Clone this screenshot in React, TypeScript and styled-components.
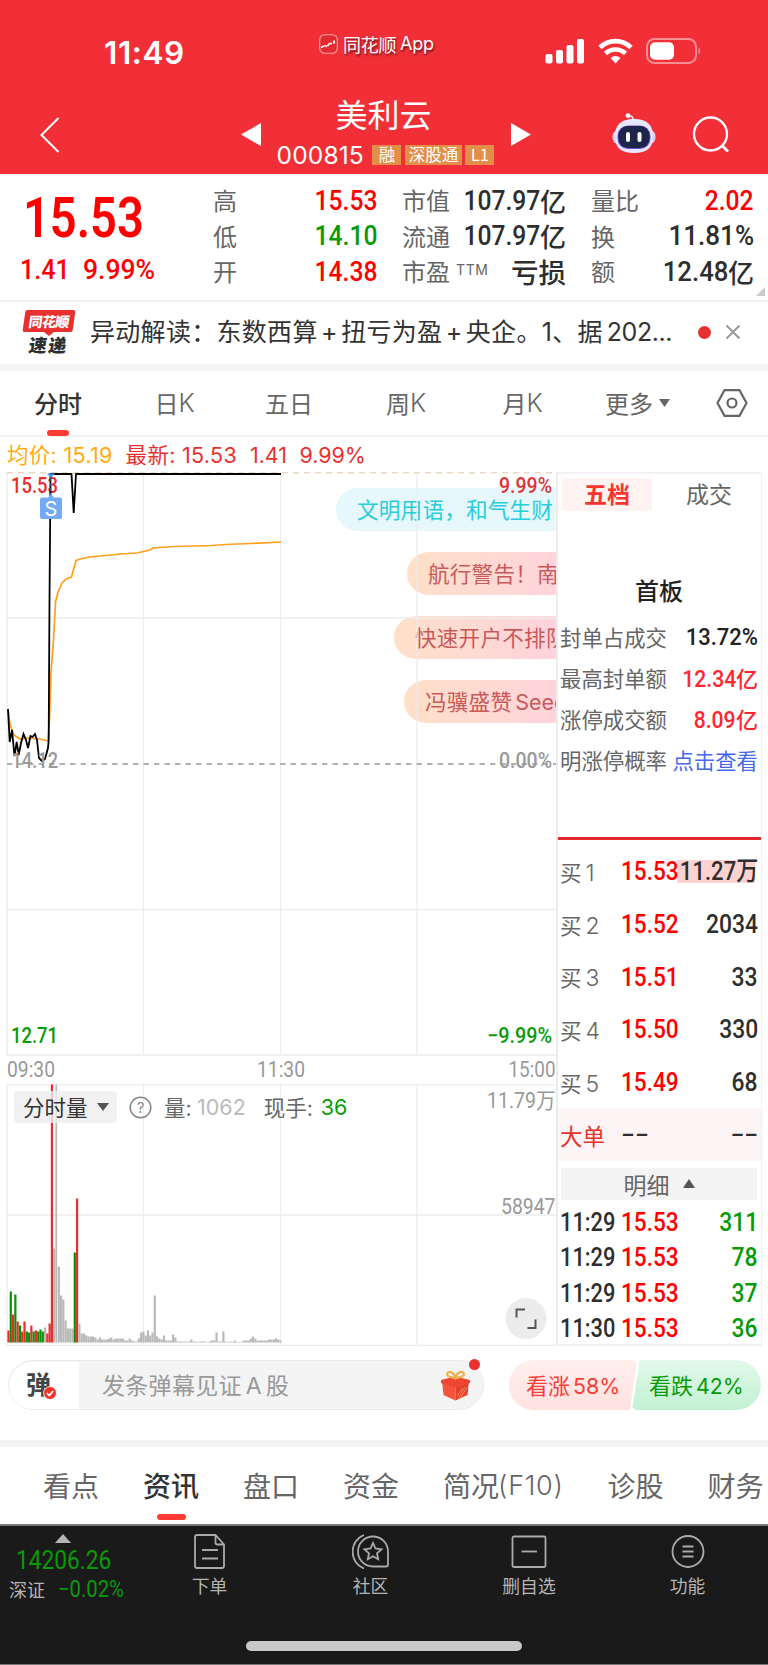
import React from "react";
import styled, { createGlobalStyle, css } from "styled-components";

const RED = "#fe0000";
const GREEN = "#089b08";
const INK = "#2e2e2e";
const GREY = "#666";

const Global = createGlobalStyle`
  * { box-sizing: border-box; }
  html, body { margin: 0; padding: 0; background: #fff; }
  body { font-family: Inter, "Noto Sans CJK SC", sans-serif; color: ${INK}; }
  svg { display: block; flex: none; }
`;

const cjk = css`font-family: "Noto Sans CJK SC", sans-serif;`;

const Page = styled.div`
  width: 768px;
  height: 1665px;
  overflow: hidden;
  background: #fff;
  display: flex;
  flex-direction: column;
`;

/* Narrow tabular numerals used for all quotes */
const Num = styled.span<{ $size: number; $c?: string; $w?: number; $sx?: number; $from?: string }>`
  display: inline-block;
  font-family: Roboto, "Noto Sans CJK SC", sans-serif;
  font-size: ${(p) => p.$size}px;
  font-weight: ${(p) => p.$w ?? 500};
  line-height: 1;
  color: ${(p) => p.$c ?? INK};
  white-space: pre;
  transform: scaleX(${(p) => p.$sx ?? 0.88});
  transform-origin: ${(p) => p.$from ?? "right"} center;
`;

/* ---------- header ---------- */
const Header = styled.header`
  height: 174px;
  flex: none;
  background: #f22f37;
  color: #fff;
`;

const StatusBar = styled.div`
  height: 92px;
  padding: 34px 68px 0 104px;
  display: grid;
  grid-template-columns: 215px 226px 1fr;
  align-items: start;
`;

const Clock = styled.div`
  font-weight: 600;
  font-size: 31.5px;
  line-height: 38px;
  letter-spacing: 0.6px;
`;

const AppMark = styled.div`
  display: flex;
  align-items: center;
  gap: 5px;
  margin-top: -1px;
  font-size: 18px;
  line-height: 22px;
  text-shadow: 1px 2px 2px rgba(0, 0, 0, 0.55);
  white-space: nowrap;
  span { ${cjk} letter-spacing: -0.3px; }
  em { font-style: normal; margin-left: -1px; letter-spacing: -0.3px; }
`;

const Signals = styled.div`
  display: flex;
  gap: 13px;
  padding-top: 4px;
`;

const NavBar = styled.div`
  height: 82px;
  display: grid;
  grid-template-columns: 241px 20px 250px 20px 1fr;
  align-items: start;
`;

const BackBox = styled.div`padding: 25px 0 0 40px;`;
const ArrowBox = styled.div`padding-top: 31px;`;
const NavIcons = styled.div`
  display: flex;
  gap: 36px;
  padding: 21px 0 0 81px;
  svg:last-child { margin-top: -1px; }
`;

const TitleBlock = styled.div`
  display: flex;
  flex-direction: column;
  align-items: center;
`;

const StockName = styled.h1`
  margin: 1px 5px 0 0;
  ${cjk}
  font-weight: 400;
  font-size: 32px;
  line-height: 40px;
`;

const CodeRow = styled.div`
  display: flex;
  align-items: center;
  gap: 3.5px;
  margin: 11px 1px 0 0;
  height: 22px;
`;

const Code = styled.span`
  font-size: 24.5px;
  line-height: 22px;
  letter-spacing: 0.15px;
  margin-right: 5px;
`;

const Badge = styled.span<{ $w: number }>`
  width: ${(p) => p.$w}px;
  height: 20px;
  background: #e28f49;
  ${cjk}
  font-size: 16.5px;
  line-height: 19px;
  text-align: center;
`;

/* ---------- quote summary ---------- */
const Quote = styled.section`
  height: 128px;
  flex: none;
  display: grid;
  grid-template-columns: 213px 164px 25px 164px 25px 163px 1fr;
  border-bottom: 2px solid #efefef;
  padding-top: 9px;
`;

const LastPrice = styled.div`
  display: flex;
  flex-direction: column;
  padding: 8px 0 0 23px;
`;

const Change = styled.div`
  display: flex;
  margin: 10px 0 0 -3px;
  > span:first-child { width: 63px; }
`;

const Metrics = styled.dl`
  margin: 0;
  display: flex;
  flex-direction: column;
`;

const Metric = styled.div`
  height: 35.6px;
  display: flex;
  justify-content: space-between;
  align-items: center;
  white-space: nowrap;
  dt { ${cjk} font-size: 24px; line-height: 33px; padding-bottom: 2px; color: ${GREY}; width: 0; }
  sup { font-family: Inter; font-size: 14px; letter-spacing: 0.6px; margin-left: 6px; vertical-align: 6px; line-height: 1; }
  dd { margin: 0; display: flex; align-items: center; }
`;

const Unit = styled.b<{ $size?: number; $c?: string }>`
  ${cjk}
  font-weight: 500;
  font-size: ${(p) => p.$size ?? 26}px;
  line-height: 1;
  color: ${(p) => p.$c ?? INK};
`;

const Corner = styled.div`align-self: end; padding: 0 0 4px 2px;`;

/* ---------- news strip ---------- */
const News = styled.section`
  height: 62px;
  flex: none;
  display: flex;
  align-items: center;
  padding: 0 0 2px 21px;
`;

const NewsText = styled.div`
  ${cjk}
  font-size: 25px;
  line-height: 36px;
  letter-spacing: 0.3px;
  color: #333;
  width: 607px;
  margin: -2px 0 0 14px;
  white-space: nowrap;
  span { font-family: Inter; }
`;
const Plus = styled.span`margin: 0 3.3px;`;
const Tail = styled.span`margin-left: 4px; letter-spacing: -0.45px;`;

const Dot = styled.i<{ $s: number }>`
  width: ${(p) => p.$s}px;
  height: ${(p) => p.$s}px;
  border-radius: 50%;
  background: #e93030;
  flex: none;
`;
const NewsDot = styled(Dot)`margin: 0 14px 0 1px;`;

const Logo = styled.div`
  ${cjk}
  width: 55px;
  height: 44px;
  flex: none;
  font-weight: 900;
  display: flex;
  flex-direction: column;
  align-items: center;
`;
const LogoTop = styled.div`
  width: 50px;
  height: 22px;
  border-radius: 2px;
  background: #e93030;
  transform: skewX(-8deg);
  color: #fff;
  font-size: 14px;
  line-height: 22px;
  text-align: center;
  letter-spacing: -0.6px;
`;
const LogoTip = styled.i`
  border: 5px solid transparent;
  border-top: 4px solid #e93030;
  border-bottom: 0;
`;
const LogoBottom = styled.div`
  transform: skewX(-8deg);
  font-size: 18px;
  line-height: 18px;
  margin-top: -1px;
  letter-spacing: 1.5px;
`;

const Band = styled.div`height: 7px; flex: none; background: #f4f4f4;`;

/* ---------- period tabs ---------- */
const Periods = styled.nav`
  height: 66px;
  flex: none;
  border-bottom: 2px solid #f1f1f1;
  display: grid;
  grid-template-columns: 116px 117px 112px 122px 111px 119px 69px;
  align-items: center;
  justify-items: center;
`;

const Tab = styled.div<{ $on?: boolean }>`
  height: 64px;
  line-height: 64px;
  ${cjk}
  font-size: 24px;
  font-weight: ${(p) => (p.$on ? 500 : 400)};
  color: ${(p) => (p.$on ? "#333" : GREY)};
  display: flex;
  align-items: center;
  gap: 6px;
  position: relative;
  span { font-family: Inter; font-weight: 300; margin-left: -6px; font-size: 25px; }
`;

const Underline = styled.i<{ $w: number; $b: number }>`
  position: absolute;
  left: 50%;
  bottom: ${(p) => p.$b}px;
  width: ${(p) => p.$w}px;
  margin-left: -${(p) => p.$w / 2}px;
  height: 6px;
  border-radius: 3px;
  background: #fb3a32;
`;

const InfoLine = styled.div`
  height: 35px;
  flex: none;
  padding: 0 0 0 7px;
  display: flex;
  font-size: 21.5px;
  line-height: 36px;
  letter-spacing: -0.05px;
  color: #e93030;
  white-space: pre;
`;
const InfoItem = styled.span<{ $c?: string }>`
  color: ${(p) => p.$c ?? "#e93030"};
  margin-right: 12.5px;
`;
const InfoPair = styled(InfoItem)`
  letter-spacing: 0.3px;
  margin-right: 13px;
`;

/* ---------- chart and order book ---------- */
const Market = styled.section`
  height: 874px;
  flex: none;
  display: flex;
  padding: 0 6px 0 6px;
`;

const Charts = styled.div`
  width: 550px;
  display: flex;
  flex-direction: column;
  position: relative;
  overflow: hidden;
  > svg { position: relative; z-index: 1; }
`;

const Bullet = styled.div<{ $x: number; $y: number; $pad: number; $cool?: boolean }>`
  position: absolute;
  left: ${(p) => p.$x}px;
  top: ${(p) => p.$y}px;
  width: 260px;
  height: 43px;
  border-radius: 22px 0 0 22px;
  padding-left: ${(p) => p.$pad}px;
  ${cjk}
  font-size: 21.6px;
  line-height: 42px;
  letter-spacing: 0.2px;
  white-space: nowrap;
  color: ${(p) => (p.$cool ? "#27cddb" : "#c85a5c")};
  background: ${(p) => (p.$cool ? "#e6f8fb" : "linear-gradient(90deg, #ffe0c8, #ffd3dc 160px)")};
  span { font-family: Inter; font-size: 21.5px; letter-spacing: 0; margin-left: 3px; }
`;

const VolumeTools = styled.div`
  position: absolute;
  z-index: 2;
  left: 8px;
  top: 619px;
  height: 32px;
  display: flex;
  align-items: center;
  ${cjk}
  font-size: 21.5px;
  line-height: 30px;
  color: ${GREY};
  white-space: pre;
`;

const VolumePick = styled.div`
  width: 103px;
  height: 32px;
  border-radius: 4px;
  background: rgba(238, 238, 238, 0.82);
  color: #333;
  display: flex;
  align-items: center;
  gap: 9px;
  padding-left: 9px;
  margin-right: 12px;
`;
const ToolLabel = styled.div<{ $l: number; $w: number }>`
  margin-left: ${(p) => p.$l}px;
  width: ${(p) => p.$w}px;
  span { font-family: Inter; }
`;
const ToolValue = styled.div<{ $c: string }>`
  font-family: Inter;
  font-size: 21.5px;
  color: ${(p) => p.$c};
`;

const Book = styled.aside`
  width: 206px;
  border: 2px solid #f1f1f1;
  border-left-color: #ececec;
  border-right-width: 1px;
  display: flex;
  flex-direction: column;
  > * { flex: none; }
`;

const BookTabs = styled.div`
  display: flex;
  gap: 5px;
  height: 37px;
  padding: 4px 0 0 4px;
  ${cjk}
  font-size: 23px;
  line-height: 30px;
  text-align: center;
  color: ${GREY};
`;
const BookTab = styled.div<{ $on?: boolean }>`
  width: ${(p) => (p.$on ? 91 : 105)}px;
  height: 33px;
  border-radius: 4px;
  ${(p) => p.$on && "background:#fff3f2; color:#fa3530; font-weight:700;"}
`;

const Seal = styled.div`
  height: 329px;
  padding: 64px 3px 0 2px;
  border-bottom: 3px solid #e6282d;
`;
const SealTitle = styled.div`
  ${cjk}
  font-weight: 500;
  font-size: 24px;
  line-height: 30px;
  text-align: center;
  color: #222;
  margin-bottom: 11px;
`;
const SealRow = styled.div`
  height: 41px;
  display: flex;
  justify-content: space-between;
  align-items: center;
  ${cjk}
  font-size: 21.4px;
  color: ${GREY};
  white-space: nowrap;
  > span:first-child { width: 0; }
  > b { font-weight: 400; color: #4568ee; }
`;

const Orders = styled.div`padding-top: 5px;`;
const Order = styled.div<{ $h: number; $big?: boolean }>`
  height: ${(p) => p.$h}px;
  padding: 0 3px 0 2px;
  display: grid;
  grid-template-columns: 61px minmax(0, 1fr) auto;
  align-items: center;
  background: ${(p) => (p.$big ? "#fdf5f5" : "transparent")};
  white-space: nowrap;
  > i { ${cjk} font-style: normal; font-size: ${(p) => (p.$big ? 22.5 : 21.5)}px; color: ${(p) => (p.$big ? "#e93030" : GREY)}; }
  > i > span { font-family: Inter; font-weight: 300; font-size: 23px; margin-left: 4px; }
`;

const SizeBar = styled.div<{ $hot?: boolean }>`
  display: flex;
  align-items: center;
  justify-content: flex-end;
  height: 23px;
  width: 81px;
  background: linear-gradient(${(p) => (p.$hot ? "#ffd2d2, #ffd2d2" : "transparent, transparent")}) 0 0 / 78px 100% no-repeat;
`;

const DetailHead = styled.div`
  height: 32px;
  margin: 7px 4px 4px 3px;
  background: #f4f4f4;
  display: flex;
  align-items: center;
  justify-content: center;
  gap: 13px;
  ${cjk}
  font-size: 23px;
  color: ${GREY};
`;

/* ---------- comment bar ---------- */
const CommentBar = styled.section`
  height: 94px;
  flex: none;
  display: flex;
  align-items: flex-start;
  padding: 14px 7px 0 8px;
`;

const InputPill = styled.div`
  width: 476px;
  height: 50px;
  border-radius: 25px;
  border: 1.5px solid #ebebeb;
  background: #f4f4f4;
  display: flex;
  align-items: center;
  position: relative;
  ${cjk}
  font-size: 23px;
  color: #999;
`;
const Toggle = styled.div`
  width: 70px;
  height: 47px;
  border-radius: 24px 0 0 24px;
  background: #fff;
  padding: 4px 0 0 17px;
  margin-right: 23px;
  font-weight: 700;
  font-size: 25px;
  line-height: 34px;
  color: #444;
  position: relative;
  svg { position: absolute; left: 34px; top: 24px; }
`;
const Placeholder = styled.div`
  width: 339px;
  margin-top: -3px;
  letter-spacing: 0.3px;
  span { font-family: Inter; margin: 0 4px; }
`;
const PillDot = styled(Dot)`position: absolute; right: 3px; top: -2px;`;

const Votes = styled.div`margin-left: 25px; display: flex;`;
const Vote = styled.div<{ $up?: boolean }>`
  width: ${(p) => (p.$up ? 128 : 129)}px;
  height: 50px;
  margin-left: ${(p) => (p.$up ? 0 : -5)}px;
  padding-left: 17px;
  clip-path: ${(p) =>
    p.$up ? "polygon(0 0, 100% 0, 94.5% 100%, 0 100%)" : "polygon(6% 0, 100% 0, 100% 100%, 0 100%)"};
  border-radius: ${(p) => (p.$up ? "25px 5px 5px 25px" : "5px 25px 25px 5px")};
  background: ${(p) =>
    p.$up ? "linear-gradient(#ffefed, #ffe2df)" : "linear-gradient(#e2f9ea, #c2f1d3)"};
  color: ${(p) => (p.$up ? "#fa3c36" : GREEN)};
  ${cjk}
  font-size: 22px;
  line-height: 48px;
  white-space: nowrap;
  span { font-family: Inter; font-size: 21.3px; margin-left: 3px; }
`;

/* ---------- section tabs ---------- */
const Sections = styled.nav`
  height: 79px;
  flex: none;
  display: flex;
  gap: 44px;
  padding-left: 43px;
  border-bottom: 2px solid #777;
`;
const SectionTab = styled(Tab)`
  height: 77px;
  line-height: 77px;
  font-size: 28px;
  white-space: nowrap;
  flex: none;
  em { font: 300 27px Inter; letter-spacing: 0.7px; margin-left: -7px; }
`;

/* ---------- bottom bar ---------- */
const BottomBar = styled.footer`
  flex: 1;
  background: #1a1a1a;
  display: flex;
  flex-direction: column;
  align-items: center;
  border-bottom: 1px solid #777;
`;
const Actions = styled.div`
  width: 768px;
  height: 115px;
  display: grid;
  grid-template-columns: 125px 169px 153px 164px 153px;
`;
const IndexBox = styled.div`
  display: flex;
  flex-direction: column;
  align-items: center;
  padding-top: 8px;
  > span { margin: 5px 0 4px 2px; }
`;
const IndexRow = styled.div`
  align-self: flex-start;
  display: flex;
  gap: 13px;
  align-items: center;
  ${cjk}
  font-size: 18px;
  line-height: 22px;
  color: #b5b5b5;
  white-space: nowrap;
  margin-left: 9px;
`;
const Action = styled.div`
  display: flex;
  flex-direction: column;
  align-items: center;
  padding-top: 8px;
  ${cjk}
  font-size: 17.8px;
  line-height: 24px;
  color: #b5b5b5;
  svg { margin-bottom: 4px; }
`;
const HomeBar = styled.div`
  width: 276px;
  height: 10px;
  border-radius: 5px;
  background: #c8c8c8;
`;

/* ---------- data ---------- */
const bars = "r12 g51 r28 g48 r21 g17 r11 r21 g11 g10 r17 g11 r12 g11 g13 g11 w15 r9 r19 r258 w94 w258 w76 w47 w43 w22 w14 w14 w14 g90 r144 w19 w9 w9 w7 w6 w6 w6 w5 w3 w5 w3 w3 w3 w4 w5 w3 w4 w4 w4 w4 w2 w2 w4 w2 w1 w1 w4 w10 w11 w7 w12 w7 w10 w47 w6 w4 w3 w7 w2 w2 w2 w8 w5 w1 w1 w1 w1 w1 w1 w3 w1 w1 w0 w1 w1 w1 w0 w1 w2 w2 w10 w1 w1 w11 w1 w0 w1 w0 w2 w0 w0 w0 w2 w2 w2 w4 w6 w4 w2 w2 w2 w2 w2 w3 w3 w3 w4 w3 w2"
  .split(" ")
  .map((s) => [s[0], Number(s.slice(1))] as [string, number]);
const barColor: Record<string, string> = { r: "#ea2c2c", g: "#089108", w: "#b9b9b9" };

const bids = [
  ["1", "15.53", "11.27万"],
  ["2", "15.52", "2034"],
  ["3", "15.51", "33"],
  ["4", "15.50", "330"],
  ["5", "15.49", "68"],
];
const trades = [
  ["11:29", "311"],
  ["11:29", "78"],
  ["11:29", "37"],
  ["11:30", "36"],
];

const ChartLabel = styled.text`
  font-family: Roboto, "Noto Sans CJK SC", sans-serif;
  font-size: 21.5px;
`;
const L = (p: { x: number; y: number; w: number; c: string; b?: number; children: string }) => (
  <ChartLabel x={p.x} y={p.y} fill={p.c} fontWeight={p.b ?? 500} textLength={p.w} lengthAdjust="spacingAndGlyphs">
    {p.children}
  </ChartLabel>
);

const PriceChart = () => (
  <svg width="550" height="612" viewBox="6 472 550 612">
    <g stroke="#ededed" strokeWidth="1.3" fill="none">
      <path d="M7 472V1055H557M143.5 472V1055M280.5 472V1055M417 472V1055M7 618H557M7 909.5H557M7 1055H557" />
    </g>
    <path d="M7 472.7H557" stroke="#ead9c0" strokeWidth="1.6" strokeDasharray="6 5" />
    <L x={11} y={493} w={47} c="#ea2c2c">15.53</L>
    <path d="M7 764H557" stroke="#999" strokeWidth="1.4" strokeDasharray="5.5 5" />
    <path
      d="M8 710L10 724L14 735L20 739L26 738L40 739L48 741L49.5 720L51 672L53.5 640L55.5 602L58 592L62 583L66 579L71.5 577L74 568L76 560.5L82 558.5L90 557L120 554L137 553L150 550L153 548L174 546.5L212 545.5L225 544.5L250 543.5L281 542"
      fill="none" stroke="#ff9f1c" strokeWidth="1.7"
    />
    <path
      d="M8 709L9.7 742L12 730L14.5 756L16.7 742L18.7 755L21 743L23.5 734L26 740L28 748L30.5 736L32.5 737L35 734L37 740L39 758L42 761L45 759L48 748L48.7 740L49.5 600L50.5 474H71.5L73.7 513L76 474H281"
      fill="none" stroke="#000" strokeWidth="1.8"
    />
    <L x={11.5} y={768} w={46.5} c="#9a9a9a">14.12</L>
    <path d="M47 473.5H55L51 478z" fill="#4a8ff0" />
    <path d="M51 478V497" stroke="#4a8ff0" strokeWidth="1.2" strokeDasharray="3 2" />
    <path d="M41.5 497.5H48L51 494L54 497.5H60Q62 497.5 62 499.5V517Q62 519 60 519H42Q40 519 40 517V499.5Q40 497.5 42 497.5z" fill="#74aaf3" />
    <text x="51" y="515.5" textAnchor="middle" fontFamily="Inter" fontSize="20" fill="#fff">S</text>
    <L x={499} y={493} w={53} c="#e03236">9.99%</L>
    <L x={499} y={768} w={53} c="#9a9a9a">0.00%</L>
    <L x={11} y={1042.5} w={47} c={GREEN}>12.71</L>
    <L x={487} y={1042.5} w={65} c={GREEN}>−9.99%</L>
    <L x={7} y={1076.5} w={48} c="#999" b={400}>09:30</L>
    <L x={257} y={1076.5} w={48} c="#999" b={400}>11:30</L>
    <L x={508.5} y={1076.5} w={47} c="#999" b={400}>15:00</L>
  </svg>
);

const VolumeChart = () => (
  <svg width="550" height="262" viewBox="6 1084 550 262">
    <path d="M557 1084.7H7V1345.3H557M143.5 1084V1345M280.5 1084V1345M417 1084V1345M7 1215H557" stroke="#ededed" strokeWidth="1.3" fill="none" />
    {bars.map(([c, h], i) => (
      <rect key={i} x={7.4 + i * 2.286} y={1342.5 - Math.max(h, 0.5)} width={c === "w" && h > 200 ? 1.7 : 2.2} height={Math.max(h, 0.5)} fill={barColor[c]} />
    ))}
    <L x={487} y={1107.5} w={68.5} c="#999" b={400}>11.79万</L>
    <L x={501} y={1213.5} w={54.5} c="#999" b={400}>58947</L>
    <circle cx="526" cy="1318.5" r="20.5" fill="#ececec" />
    <path d="M516.5 1317.5V1309.5H525M527.5 1328H535.5V1319.5" stroke="#555" strokeWidth="2" fill="none" />
  </svg>
);

const Robot = () => (
  <svg width="44" height="41" viewBox="0 0 44 41">
    <path d="M17 2.5Q21 2.5 21.5 8" fill="none" stroke="#e8e8ff" strokeWidth="1.6" />
    <circle cx="16" cy="2.7" r="2.4" fill="#fff" />
    <rect x="0.5" y="17" width="43" height="14" rx="6" fill="#cfd2f7" />
    <path d="M22 6C36 6 41 13 41 23C41 35 35 40 22 40C9 40 3 35 3 23C3 13 8 6 22 6z" fill="#e6e7fc" />
    <rect x="5.5" y="12.5" width="33" height="23.5" rx="10.5" fill="#6b4fd0" />
    <rect x="6.5" y="13" width="31" height="22" rx="9.5" fill="#1d2648" />
    <rect x="14" y="19" width="4" height="10" rx="2" fill="#fff" />
    <rect x="25.5" y="19" width="4" height="10" rx="2" fill="#fff" />
  </svg>
);

const Gift = () => (
  <svg width="29" height="31" viewBox="0 0 29 31">
    <path d="M1 11L14.5 15V30.5L2.5 25z" fill="#f4553a" />
    <path d="M28 11L14.5 15V30.5L26.5 25z" fill="#e2402c" />
    <path d="M0 10L14 6.5L29 10V13L14.5 17.500L0 13z" fill="#ee4630" />
    <path d="M17 29L24 17M19.5 28L26.5 17M21.5 18L16 26" stroke="#f58a5c" strokeWidth="0.9" />
    <path d="M14.5 8.5C11 7 5.5 7 6 4C6.5 0.500 13 1 14.5 8.5C16 1 22.5 0.500 23 4C23.500 7 18 7 14.5 8.5z" fill="none" stroke="#eeb04b" strokeWidth="2.2" />
  </svg>
);

export default function App() {
  return (
    <Page>
      <Global />
      <Header>
        <StatusBar>
          <Clock>11:49</Clock>
          <AppMark>
            <svg width="19" height="20" viewBox="0 0 19 20">
              <rect x="0.7" y="0.7" width="17.6" height="18.6" rx="5" fill="#e22a31" stroke="#ffa3a5" strokeWidth="1.1" />
              <path d="M2 13.5L5 12M5.5 11.5L8 12.5M8.5 12L11 9M11.5 10L13 9" stroke="#fff" strokeWidth="1.6" fill="none" />
              <path d="M15 6.5V9.5" stroke="#fff" strokeWidth="2" />
            </svg>
            <span>同花顺</span><em>App</em>
          </AppMark>
          <Signals>
            <svg width="40" height="26" viewBox="0 0 40 26" fill="#fff">
              <rect x="0.5" y="16" width="7" height="9.5" rx="2" />
              <rect x="11" y="12" width="7" height="13.5" rx="2" />
              <rect x="21.5" y="7" width="7" height="18.5" rx="2" />
              <rect x="32" y="1" width="7" height="24.5" rx="2" />
            </svg>
            <svg width="35" height="26" viewBox="0 0 35 26" fill="none" stroke="#fff" strokeWidth="4.6">
              <path d="M2 9.5A22 22 0 0 1 33 9.5" />
              <path d="M7.5 15.5A14.5 14.5 0 0 1 27.5 15.5" />
              <path d="M17.5 25.5L12.5 20A7.5 7.5 0 0 1 22.5 20z" fill="#fff" stroke="none" />
            </svg>
            <svg width="56" height="26" viewBox="0 0 56 26">
              <rect x="1" y="1" width="49" height="24" rx="7.5" fill="none" stroke="#f98f93" strokeWidth="2" />
              <rect x="4" y="4.3" width="24" height="17.5" rx="5" fill="#fff" />
              <path d="M52.5 9Q56 13 52.5 17z" fill="#f98f93" />
            </svg>
          </Signals>
        </StatusBar>
        <NavBar>
          <BackBox>
            <svg width="20" height="36" viewBox="0 0 20 36"><path d="M18.5 1L1.5 18L18.5 35" fill="none" stroke="#fff" strokeWidth="2" /></svg>
          </BackBox>
          <ArrowBox><svg width="20" height="23"><path d="M20 0V23L0 11.5z" fill="#fff" /></svg></ArrowBox>
          <TitleBlock>
            <StockName>美利云</StockName>
            <CodeRow>
              <Code>000815</Code>
              <Badge $w={29}>融</Badge>
              <Badge $w={57}>深股通</Badge>
              <Badge $w={29}>L1</Badge>
            </CodeRow>
          </TitleBlock>
          <ArrowBox><svg width="20" height="23"><path d="M0 0V23L20 11.5z" fill="#fff" /></svg></ArrowBox>
          <NavIcons>
            <Robot />
            <svg width="38" height="40" viewBox="0 0 38 40" fill="none" stroke="#fff" strokeWidth="2.3">
              <circle cx="18.5" cy="22" r="16.5" /><path d="M29.5 33L36 39.5" strokeWidth="2.8" />
            </svg>
          </NavIcons>
        </NavBar>
      </Header>

      <Quote>
        <LastPrice>
          <Num $size={55} $w={600} $c={RED} $from="left" $sx={0.855}>15.53</Num>
          <Change>
            <Num $size={28.5} $c={RED} $from="left">1.41</Num>
            <Num $size={28.5} $c={RED} $from="left" $sx={0.93}>9.99%</Num>
          </Change>
        </LastPrice>
        <Metrics>
          <Metric><dt>高</dt><dd><Num $size={28} $c={RED}>15.53</Num></dd></Metric>
          <Metric><dt>低</dt><dd><Num $size={28} $c={GREEN}>14.10</Num></dd></Metric>
          <Metric><dt>开</dt><dd><Num $size={28} $c={RED}>14.38</Num></dd></Metric>
        </Metrics>
        <span />
        <Metrics>
          <Metric><dt>市值</dt><dd><Num $size={28}>107.97</Num><Unit>亿</Unit></dd></Metric>
          <Metric><dt>流通</dt><dd><Num $size={28}>107.97</Num><Unit>亿</Unit></dd></Metric>
          <Metric><dt>市盈<sup>TTM</sup></dt><dd><Unit $size={27.5}>亏损</Unit></dd></Metric>
        </Metrics>
        <span />
        <Metrics>
          <Metric><dt>量比</dt><dd><Num $size={28} $c={RED}>2.02</Num></dd></Metric>
          <Metric><dt>换</dt><dd><Num $size={28} $sx={0.93}>11.81%</Num></dd></Metric>
          <Metric><dt>额</dt><dd><Num $size={28} $sx={0.92}>12.48</Num><Unit>亿</Unit></dd></Metric>
        </Metrics>
        <Corner><svg width="9" height="9"><path d="M9 0V9H0z" fill="#ccc" /></svg></Corner>
      </Quote>

      <News>
        <Logo><LogoTop>同花顺</LogoTop><LogoTip /><LogoBottom>速递</LogoBottom></Logo>
        <NewsText>异动解读：东数西算<Plus>+</Plus>扭亏为盈<Plus>+</Plus>央企。<span>1</span>、据<Tail>202...</Tail></NewsText>
        <NewsDot $s={13} />
        <svg width="16" height="16" viewBox="0 0 16 16"><path d="M1.5 1.5L14.5 14.5M14.5 1.5L1.5 14.5" stroke="#999" strokeWidth="2" /></svg>
      </News>
      <Band />

      <Periods>
        <Tab $on>分时<Underline $w={22} $b={-1} /></Tab>
        <Tab>日<span>K</span></Tab>
        <Tab>五日</Tab>
        <Tab>周<span>K</span></Tab>
        <Tab>月<span>K</span></Tab>
        <Tab>更多<svg width="11" height="8"><path d="M0 0H11L5.5 8z" fill={GREY} /></svg></Tab>
        <svg width="32" height="28" viewBox="0 0 32 28" fill="none" stroke={GREY} strokeWidth="2.2">
          <path d="M8.5 1.2H23.5L30.5 14L23.5 26.8H8.5L1.5 14z" /><circle cx="16" cy="14" r="4.5" />
        </svg>
      </Periods>
      <InfoLine>
        <InfoPair $c="#ffab0d">均价: 15.19</InfoPair>
        <InfoPair>最新: 15.53</InfoPair>
        <InfoItem>1.41</InfoItem>
        <InfoItem>9.99%</InfoItem>
      </InfoLine>

      <Market>
        <Charts>
          <Bullet $cool $x={330} $y={16} $pad={21}>文明用语，和气生财</Bullet>
          <Bullet $x={401} $y={80} $pad={21}>航行警告！南海</Bullet>
          <Bullet $x={388} $y={144} $pad={21}>快速开户不排队</Bullet>
          <Bullet $x={398} $y={208} $pad={21}>冯骥盛赞<span>Seed</span></Bullet>
          <PriceChart />
          <VolumeChart />
          <VolumeTools>
            <VolumePick>分时量<svg width="12" height="8"><path d="M0 0H12L6 8z" fill="#555" /></svg></VolumePick>
            <svg width="23" height="23" viewBox="0 0 23 23">
              <circle cx="11.5" cy="11.5" r="10.3" fill="none" stroke="#888" strokeWidth="1.5" />
              <text x="11.5" y="17" textAnchor="middle" fontFamily="Inter" fontSize="15" fill="#888">?</text>
            </svg>
            <ToolLabel $l={12} $w={33}>量<span>:</span></ToolLabel>
            <ToolValue $c="#bababa">1062</ToolValue>
            <ToolLabel $l={18} $w={57}>现手<span>:</span></ToolLabel>
            <ToolValue $c={GREEN}>36</ToolValue>
          </VolumeTools>
        </Charts>
        <Book>
          <BookTabs><BookTab $on>五档</BookTab><BookTab>成交</BookTab></BookTabs>
          <Seal>
            <SealTitle>首板</SealTitle>
            <SealRow><span>封单占成交</span><Num $size={24} $c="#222" $sx={0.915}>13.72%</Num></SealRow>
            <SealRow><span>最高封单额</span><div><Num $size={24} $c="#fe2632" $sx={0.88}>12.34</Num><Unit $size={22} $c="#fe2632">亿</Unit></div></SealRow>
            <SealRow><span>涨停成交额</span><div><Num $size={24} $c="#fe2632" $sx={0.88}>8.09</Num><Unit $size={22} $c="#fe2632">亿</Unit></div></SealRow>
            <SealRow><span>明涨停概率</span><b>点击查看</b></SealRow>
          </Seal>
          <Orders>
            {bids.map(([n, price, size], i) => (
              <Order key={n} $h={52.7}>
                <i>买<span>{n}</span></i>
                <Num $size={26} $c={RED} $from="left" $sx={0.87}>{price}</Num>
                <SizeBar $hot={i === 0}><Num $size={26} $sx={i === 0 ? 0.85 : 0.88}>{size}</Num></SizeBar>
              </Order>
            ))}
            <Order $h={52.5} $big><i>大单</i><Num $size={26} $from="left" $sx={0.95}>−−</Num><Num $size={26} $sx={0.95}>−−</Num></Order>
          </Orders>
          <DetailHead>明细<svg width="12" height="9"><path d="M0 9H12L6 0z" fill="#555" /></svg></DetailHead>
          {trades.map(([t, size], i) => (
            <Order key={i} $h={35.5}>
              <Num $size={26} $from="left" $sx={0.84}>{t}</Num>
              <Num $size={26} $c={RED} $from="left" $sx={0.87}>15.53</Num>
              <Num $size={26} $c={GREEN}>{size}</Num>
            </Order>
          ))}
        </Book>
      </Market>

      <CommentBar>
        <InputPill>
          <Toggle>弹
            <svg width="14" height="14" viewBox="0 0 14 14"><circle cx="7" cy="7" r="6.5" fill="#f0352f" stroke="#fff" strokeWidth="0.8" /><path d="M3.8 7L6.2 9.5L10.2 5" stroke="#fff" strokeWidth="1.6" fill="none" /></svg>
          </Toggle>
          <Placeholder>发条弹幕见证<span>A</span>股</Placeholder>
          <Gift />
          <PillDot $s={11} />
        </InputPill>
        <Votes>
          <Vote $up>看涨<span>58%</span></Vote>
          <Vote>看跌<span>42%</span></Vote>
        </Votes>
      </CommentBar>
      <Band />

      <Sections>
        <SectionTab>看点</SectionTab>
        <SectionTab $on>资讯<Underline $w={29} $b={4} /></SectionTab>
        <SectionTab>盘口</SectionTab>
        <SectionTab>资金</SectionTab>
        <SectionTab>简况<em>(F10)</em></SectionTab>
        <SectionTab>诊股</SectionTab>
        <SectionTab>财务</SectionTab>
      </Sections>

      <BottomBar>
        <Actions>
          <IndexBox>
            <svg width="16" height="9"><path d="M0 9H16L8 0z" fill="#b5b5b5" /></svg>
            <Num $size={25.5} $w={400} $c={GREEN} $from="center" $sx={0.89}>14206.26</Num>
            <IndexRow>深证<Num $size={23} $w={400} $c={GREEN} $from="left" $sx={0.88}>−0.02%</Num></IndexRow>
          </IndexBox>
          <Action>
            <svg width="32" height="35" viewBox="0 0 32 35" fill="none" stroke="#aaa" strokeWidth="1.8">
              <path d="M3 1H21.5L30 10.5V32Q30 34 28 34H3Q1 34 1 32V3Q1 1 3 1zM21.5 1V8.5Q21.5 10.5 23.5 10.5H30M8 16H24M8 24.5H24" />
            </svg>下单
          </Action>
          <Action>
            <svg width="37" height="35" viewBox="0 0 37 35" fill="none" stroke="#aaa" strokeWidth="1.8">
              <path d="M36 17.5A15 15 0 1 0 21 32.5H34Q36 32.5 36 30.5zM12 1A18 18 0 0 0 12 34.5" />
              <path d="M21 9L23.5 14.5L29.5 15.3L25 19.3L26.2 25.3L21 22.3L15.8 25.3L17 19.3L12.5 15.3L18.5 14.5z" />
            </svg>社区
          </Action>
          <Action>
            <svg width="36" height="35" viewBox="0 0 36 35" fill="none" stroke="#aaa" strokeWidth="1.8">
              <rect x="1.5" y="2.5" width="33" height="30.5" rx="1.5" /><path d="M10.5 17.5H26" />
            </svg>删自选
          </Action>
          <Action>
            <svg width="34" height="35" viewBox="0 0 34 35" fill="none" stroke="#aaa" strokeWidth="1.8">
              <circle cx="17" cy="17.5" r="15.5" /><path d="M11.5 12.5H22.5M11.5 17.5H22.5M11.5 22.5H22.5" />
            </svg>功能
          </Action>
        </Actions>
        <HomeBar />
      </BottomBar>
    </Page>
  );
}
